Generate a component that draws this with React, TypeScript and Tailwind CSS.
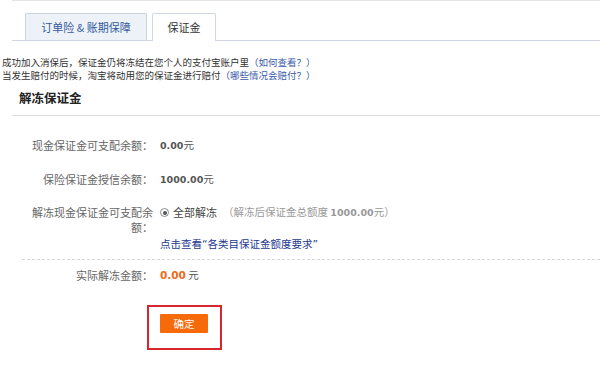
import React from 'react'

const cjk = "font-['Noto_Sans_CJK_SC',sans-serif]"
const num = "font-['DejaVu_Sans','Noto_Sans_CJK_SC',sans-serif]"

function Label({ children }: { children: React.ReactNode }) {
  return (
    <div className="ml-[31px] w-[122px] shrink-0 text-right text-[11px] text-[#666] leading-[15px]">{children}</div>
  )
}

export default function App() {
  return (
    <div className={`w-[600px] h-[367px] overflow-hidden bg-white text-[10.5px] text-[#333] ${cjk}`}>
      {/* previous section edge */}
      <div className="ml-3 h-px bg-[#e4e4e4]" />

      {/* Tabs */}
      <div className="mt-3 ml-3 flex h-[28px] items-end border-b border-[#cfd8e2] pl-[13px]">
        <div className="flex h-[27px] w-[122px] items-center justify-center rounded-t-[2px] border border-b-0 border-[#c9d4e0] bg-[#edf2f9] text-[11px] text-[#345a9c]">
          订单险 &amp; 账期保障
        </div>
        <div className="-mb-px ml-[5px] flex h-[28px] w-[64px] items-center justify-center rounded-t-[2px] border border-b-0 border-[#cfd8e2] bg-white text-[11px] text-[#333]">
          保证金
        </div>
      </div>

      {/* Notice */}
      <div className="mt-[15px] px-[2px] text-[9.5px] leading-[13px]">
        <p>
          成功加入消保后，保证金仍将冻结在您个人的支付宝账户里<span className="text-[#3b5ba9]">（如何查看？）</span>
        </p>
        <p>
          当发生赔付的时候，淘宝将动用您的保证金进行赔付<span className="text-[#3b5ba9]">（哪些情况会赔付？）</span>
        </p>
      </div>

      {/* Heading */}
      <div className="ml-3 mt-[8px] border-b border-[#dcdcdc] pb-[9px] pl-[7px]">
        <h2 className="text-[12.5px] font-bold leading-[16px] text-[#222]">解冻保证金</h2>
      </div>

      {/* Rows */}
      <div className="mt-[21px] flex items-center">
        <Label>现金保证金可支配余额：</Label>
        <div className="ml-[7px] leading-[15px] text-[#555]">
          <span className={`${num} text-[9.5px] font-bold`}>0.00</span>元
        </div>
      </div>

      <div className="mt-[18px] flex items-center">
        <Label>保险保证金授信余额：</Label>
        <div className="ml-[7px] leading-[15px] text-[#555]">
          <span className={`${num} text-[9.5px] font-bold`}>1000.00</span>元
        </div>
      </div>

      <div className="mt-[18px] flex items-start">
        <Label>解冻现金保证金可支配余额：</Label>
        <div className="ml-[7px]">
          <div className="flex h-[15px] items-center">
            <span className="flex h-[9px] w-[9px] items-center justify-center rounded-full border border-[#8a8a8a] bg-white">
              <span className="h-[4px] w-[4px] rounded-full bg-[#555]" />
            </span>
            <span className="ml-[4px] text-[11px] text-[#444]">全部解冻</span>
            <span className="ml-[6px] text-[#999]">
              （解冻后保证金总额度 <span className={`${num} text-[9.5px] font-bold`}>1000.00</span>元）
            </span>
          </div>
          <a className="mt-[16px] block leading-[15px] text-[#23388f]">
            点击查看<span className={num}>“</span>各类目保证金额度要求<span className={num}>”</span>
          </a>
        </div>
      </div>

      <div className="ml-[22px] mt-[7px] border-t border-dashed border-[#d6d6d6]" />

      <div className="mt-[7px] flex items-center">
        <Label>实际解冻金额：</Label>
        <div className="ml-[7px] leading-[15px] text-[#555]">
          <span className={`${num} text-[10.5px] font-bold text-[#ee6a1a]`}>0.00</span> 元
        </div>
      </div>

      {/* Confirm */}
      <div className="ml-[147px] mt-[22px] h-[45px] w-[75px] border-2 border-[#d7262d] pl-[11px] pt-[7px]">
        <button className="flex h-[19px] w-[48px] items-center justify-center rounded-[1px] bg-[#f66a0a] text-[10.5px] text-white">
          确定
        </button>
      </div>
    </div>
  )
}
